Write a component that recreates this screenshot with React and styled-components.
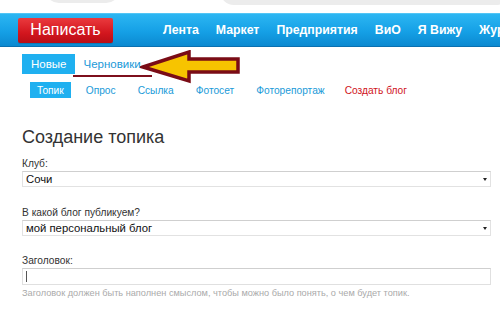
import React from "react";
import styled, { createGlobalStyle } from "styled-components";

const Global = createGlobalStyle`
  html, body { margin: 0; padding: 0; background: #fff; }
  body { font-family: "Liberation Sans", Arial, sans-serif; width: 500px; height: 314px; overflow: hidden; }
`;

const Page = styled.div`
  position: relative;
  width: 500px;
  height: 314px;
  overflow: hidden;
`;

const TopStrip = styled.div`
  height: 13px;
  display: flex;
  overflow: hidden;
  align-items: flex-end;
`;

const Pill = styled.div`
  height: 20px;
  margin-left: ${(p) => p.$ml}px;
  width: ${(p) => p.$w}px;
  margin-bottom: ${(p) => p.$mb}px;
  background: #ececec;
  border-radius: 0 0 14px 14px;
  flex-shrink: 0;
`;

const NavBar = styled.div`
  height: 34px;
  box-sizing: border-box;
  background: linear-gradient(#2cb6f2, #15a0e6 55%, #0b89d0);
  border-top: 1px solid #52c5f5;
  border-bottom: 1px solid #0a70b0;
  display: flex;
  align-items: center;
  padding-left: 18px;
  white-space: nowrap;
  overflow: hidden;
`;

const WriteButton = styled.div`
  flex-shrink: 0;
  width: 95px;
  height: 25px;
  background: linear-gradient(#ea3a3e, #d3161e 60%, #b80e16);
  border-radius: 2px;
  color: #fff;
  font-size: 16px;
  display: flex;
  align-items: center;
  justify-content: center;
  margin-right: 50px;
  box-shadow: 0 1px 0 rgba(0,0,0,0.15);
`;

const NavLink = styled.span`
  flex-shrink: 0;
  color: #fff;
  font-weight: bold;
  font-size: 12.3px;
  margin-right: 17px;
`;

const Content = styled.div`
  padding-left: 22px;
  padding-right: 9px;
`;

const Tabs = styled.div`
  display: flex;
  align-items: center;
  margin-top: 7px;
  height: 20px;
`;

const Tab = styled.div`
  height: 20px;
  padding: 0 ${(p) => (p.$active ? 9 : 5)}px;
  margin-right: 3px;
  display: flex;
  align-items: center;
  font-size: 11.5px;
  color: ${(p) => (p.$active ? "#fff" : "#1a9ad8")};
  background: ${(p) => (p.$active ? "#1fb0f0" : "transparent")};
  position: relative;
`;

const Underline = styled.div`
  position: absolute;
  left: -5px;
  right: -6px;
  bottom: -3px;
  height: 2px;
  background: #7d0f1c;
`;

const SubTabs = styled.div`
  display: flex;
  align-items: center;
  margin-top: 8px;
  padding-left: 8px;
  height: 16px;
`;

const SubTab = styled.div`
  height: 16px;
  padding: 0 ${(p) => (p.$active ? 7 : 0)}px;
  margin-right: ${(p) => p.$mr}px;
  display: flex;
  align-items: center;
  font-size: 10.2px;
  color: ${(p) => (p.$red ? "#d0141c" : p.$active ? "#fff" : "#1a9ad8")};
  background: ${(p) => (p.$active ? "#1fb0f0" : "transparent")};
`;

const Heading = styled.h1`
  margin: 27px 0 0;
  font-size: 18px;
  font-weight: normal;
  color: #333;
  line-height: 24px;
`;

const Label = styled.div`
  font-size: 10.2px;
  color: #333;
  margin-top: ${(p) => p.$mt}px;
  line-height: 12px;
`;

const Select = styled.div`
  height: 16px;
  box-sizing: border-box;
  border: 1px solid #e2e2e2;
  border-top-color: #cfcfcf;
  display: flex;
  align-items: center;
  justify-content: space-between;
  padding: 0 3px 0 3px;
  font-size: 11.3px;
  color: #111;
  margin-top: 1px;
`;

const Caret = styled.span`
  width: 0;
  height: 0;
  border-left: 2px solid transparent;
  border-right: 2px solid transparent;
  border-top: 3px solid #222;
`;

const Input = styled.div`
  height: 17px;
  box-sizing: border-box;
  border: 1px solid #e0e0e0;
  border-top-color: #cfcfcf;
  margin-top: 1px;
  display: flex;
  align-items: center;
  padding-left: 3px;
`;

const Cursor = styled.span`
  width: 1px;
  height: 11px;
  background: #555;
`;

const Hint = styled.div`
  font-size: 9.2px;
  color: #aaa;
  margin-top: 3px;
`;

const Arrow = styled.svg`
  position: absolute;
  left: 140px;
  top: 50px;
`;

export default function App() {
  return (
    <Page>
      <Global />
      <TopStrip>
        <Pill $ml={45} $w={75} $mb={10} />
        <Pill $ml={100} $w={290} $mb={8} />
      </TopStrip>
      <NavBar>
        <WriteButton>Написать</WriteButton>
        <NavLink>Лента</NavLink>
        <NavLink>Маркет</NavLink>
        <NavLink>Предприятия</NavLink>
        <NavLink>ВиО</NavLink>
        <NavLink>Я Вижу</NavLink>
        <NavLink>Журналы</NavLink>
      </NavBar>
      <Content>
        <Tabs>
          <Tab $active>Новые</Tab>
          <Tab>
            Черновики
            <Underline />
          </Tab>
        </Tabs>
        <SubTabs>
          <SubTab $active $mr={15}>Топик</SubTab>
          <SubTab $mr={22}>Опрос</SubTab>
          <SubTab $mr={22}>Ссылка</SubTab>
          <SubTab $mr={22}>Фотосет</SubTab>
          <SubTab $mr={20}>Фоторепортаж</SubTab>
          <SubTab $red $mr={0}>Создать блог</SubTab>
        </SubTabs>
        <Heading>Создание топика</Heading>
        <Label $mt={9}>Клуб:</Label>
        <Select>
          <span>Сочи</span>
          <Caret />
        </Select>
        <Label $mt={20}>В какой блог публикуем?</Label>
        <Select>
          <span>мой персональный блог</span>
          <Caret />
        </Select>
        <Label $mt={19}>Заголовок:</Label>
        <Input>
          <Cursor />
        </Input>
        <Hint>Заголовок должен быть наполнен смыслом, чтобы можно было понять, о чем будет топик.</Hint>
      </Content>
      <Arrow width="102" height="34" viewBox="0 0 102 34">
        <polygon
          points="3,17 49,2 49,9 98,9 98,22 49,22 49,31"
          fill="#f7c400"
          stroke="#7a0c16"
          strokeWidth="3.5"
          strokeLinejoin="miter"
        />
      </Arrow>
    </Page>
  );
}
